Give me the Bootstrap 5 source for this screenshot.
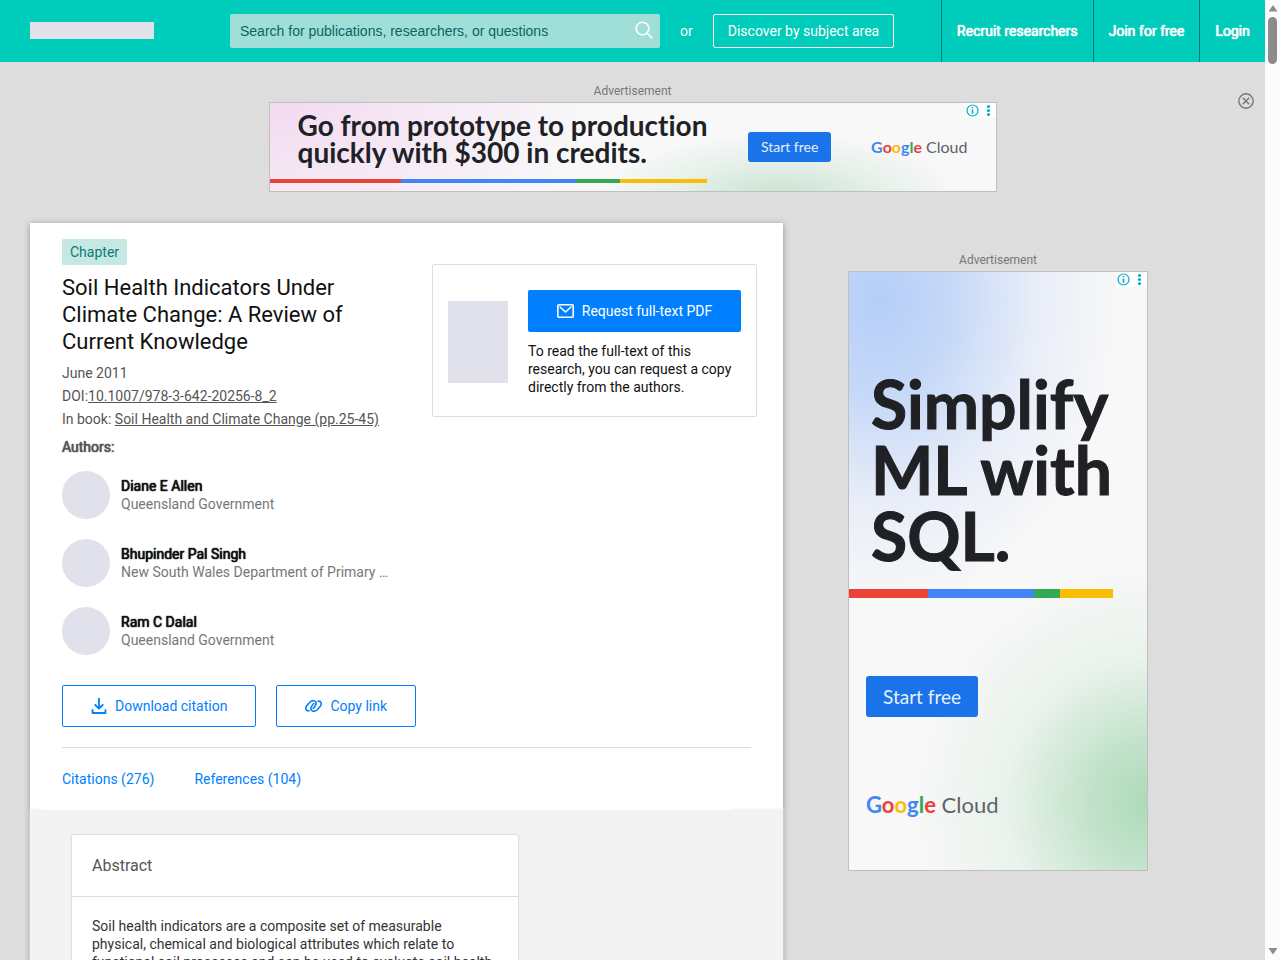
<!DOCTYPE html>
<html lang="en">
<head>
<meta charset="utf-8">
<meta name="viewport" content="width=device-width, initial-scale=1">
<title>Soil Health Indicators Under Climate Change: A Review of Current Knowledge</title>
<link href="https://cdn.jsdelivr.net/npm/bootstrap@5.3.0/dist/css/bootstrap.min.css" rel="stylesheet">
<style>
body{font-family:Roboto,"Liberation Sans",sans-serif;font-size:14px;line-height:18px;color:#111;background:#ddd}
.viewport-wrap{background:#ddd}
.topbar{background:#00ccbb;height:62px;color:#fff}
.site-logo{width:124px;height:17px;background:#e1e1eb;margin:0 76px 2px 30px}
.search-box{width:430px;height:34px;background:#a0dfd8;border-radius:2px}
.search-box input{font:14px "Liberation Sans",sans-serif;background:transparent;border:0;padding:0 10px;color:#0b6562;outline:0}
.search-box input::placeholder{color:#0b6562;opacity:1}
.search-box button{border:0;background:none;padding:0 7px 3px}
.discover{border:1px solid #fff;border-radius:2px;height:34px;padding:0 14px;line-height:32px;color:#fff}
.topnav a{color:#fff;padding:0 15px;border-left:1px solid #00786f;height:62px;line-height:62px}
.strong-text{font-weight:400;text-shadow:0 0 1px currentColor,0 0 1px currentColor}
.ad-label{font-size:12px;line-height:14px;color:#777;text-align:center}
.ad{border:1px solid #bfbfbf;position:relative;margin-top:4px;color:#202124;font-family:Lato,sans-serif;font-variant-ligatures:none}
.leader{width:728px;height:90px;background:radial-gradient(ellipse 180px 66px at 510px 96px,#c6e3d0,rgba(198,227,208,.4) 55%,rgba(198,227,208,0)),radial-gradient(ellipse 320px 180px at 0 0,#f3daf2,#f8f8f8)}
.leader .headline{font-size:28px;line-height:27px;font-weight:700;padding:9px 0 0 28px}
.leader .stripes{height:4px;width:438px;margin-bottom:8px}
.leader-end{gap:40px;padding-right:28px}
.stripe-red{background:#ea4335}.stripe-blue{background:#4285f4}.stripe-green{background:#34a853}.stripe-gold{background:#fbbc04}
.skyscraper{width:300px;height:600px;background:radial-gradient(circle 240px at 300px 530px,#acdab8,rgba(176,219,187,.75) 25%,rgba(176,219,187,.2) 60%,rgba(176,219,187,0)),radial-gradient(ellipse 240px 310px at 30px 28px,#b5cef8,#c5d8f8 30%,#e8edf8 65%,#f8f8f8)}
.headline{-webkit-text-stroke:1px #202124}
.leader .headline{-webkit-text-stroke:0}
.skyscraper .headline{font-size:66px;line-height:66px;font-weight:700;padding:99px 0 0 22px}
.skyscraper .stripes{height:9px;width:264px;margin-top:20px}
.cta{background:#1a73e8;color:#e8f0fe;border:0;border-radius:3px;font-family:Lato,sans-serif}
.cta-s{font-size:14px;width:83px;height:30px}
.cta-l{font-size:19px;width:112px;height:41px;margin:78px 0 0 17px}
.brand-s{font-size:16px;line-height:20px}
.brand-l{font-size:22px;line-height:30px;margin:73px 0 0 17px}
.g-b{color:#4285f4}.g-r{color:#ea4335}.g-y{color:#fbbc04}.g-g{color:#34a853}.g-c{color:#5f6368}
.g-b,.g-r,.g-y,.g-g{font-weight:700}
.ad-tools{position:absolute;top:0;right:0;background:#fff;height:15px}
.close-ad{position:absolute;right:11px;top:31px;border:0;background:none;padding:0}
.banner-row{padding:22px 0 31px}
.sheet{background:#fff;box-shadow:0 1px 6px rgba(0,0,0,.35);min-width:0;margin-left:30px}
.top-part{padding:16px 26px 0 32px}
.lead-col{width:354px}
.tag{background:#c5e8e3;color:#0c7a75;border-radius:2px;padding:4px 8px}
.paper-title{font-size:22px;line-height:27px;font-weight:400;color:#111;padding:9px 24px 0 0;margin-bottom:7px}
.meta{color:#555;line-height:23px}
.meta a{color:#555;text-decoration:underline}
.authors-label{padding-top:5px}
.author{gap:11px;margin-bottom:20px}
.author>div:last-child{padding-top:6px}
.authors-label+.author{margin-top:12px}
.avatar{width:48px;height:48px;border-radius:50%;background:#e1e1eb}
.inst{color:#777}
.actions{gap:20px;padding-top:10px}
.line-btn{border:1px solid #0080ff;background:#fff;color:#0080ff;border-radius:2px;height:42px;padding:0 28px}
.request{width:325px;border:1px solid #ddd;border-radius:2px;padding:25px 15px 20px;margin:25px 0 auto}
.request p{padding-top:10px}
.request button{background:#0080ff;color:#fff;border:0;border-radius:2px;height:42px}
.request-copy{margin-left:20px}
.thumb{width:60px;height:82px;background:#e1e1eb;margin-top:11px}
.rule{border-top:1px solid #ddd;margin:20px 32px 0}
.tabs{position:relative;gap:40px;background:#fff;margin:0 52px 0 12px;padding:22px 20px;z-index:1}
.tabs a{color:#0080ff}
.lower{background:#f3f3f3;box-shadow:0 -1px 2px #f3f3f3;padding:25px 42px 40px}
.abstract{background:#fff;border-radius:1px;box-shadow:0 0 2px rgba(0,0,0,.3)}
.abstract h2{font-size:16px;line-height:20px;font-weight:400;color:#555;padding:21px 20px 20px;border-bottom:1px solid #ddd}
.abstract-copy{padding:20px;color:#333}
.rail{width:482px;padding-left:65px}
.sky-wrap{width:300px;padding-top:30px}
.scroller{width:15px;background:#fcfcfc}
.scroll-thumb{width:9px;height:47px;border-radius:5px;background:#8b8b8b}
</style>
</head>
<body>
<div class="viewport-wrap d-flex vh-100 overflow-hidden">
<div class="flex-grow-1 overflow-hidden">
<header class="topbar d-flex align-items-center">
  <div class="site-logo flex-shrink-0"></div>
  <form class="search-box d-flex align-items-center">
    <input class="flex-grow-1 h-100" type="text" aria-label="Search" placeholder="Search for publications, researchers, or questions">
    <button type="button" aria-label="Submit search"><svg width="18" height="18" viewBox="0 0 18 18" fill="none" stroke="#fff" stroke-width="1.6" stroke-linecap="round"><circle cx="7.5" cy="7.5" r="6.3"/><path d="M12.2 12.2 17 17"/></svg></button>
  </form>
  <span class="px-3 mx-1">or</span>
  <a class="discover text-decoration-none text-nowrap" href="#">Discover by subject area</a>
  <nav class="topnav strong-text d-flex ms-auto text-nowrap"><a class="text-decoration-none" href="#">Recruit researchers</a><a class="text-decoration-none" href="#">Join for free</a><a class="text-decoration-none" href="#">Login</a></nav>
</header>

<section class="banner-row position-relative d-flex flex-column align-items-center">
  <div class="ad-label">Advertisement</div>
  <div class="ad leader d-flex justify-content-between">
    <div class="d-flex flex-column">
      <div class="headline text-nowrap">Go from prototype to production<br>quickly with $300 in credits.</div>
      <div class="stripes d-flex mt-auto"><i class="stripe-red" style="width:30%"></i><i class="stripe-blue" style="width:40%"></i><i class="stripe-green" style="width:10%"></i><i class="stripe-gold" style="width:20%"></i></div>
    </div>
    <div class="leader-end d-flex align-items-center">
      <button class="cta cta-s">Start free</button>
      <div class="brand-s"><span class="g-b">G</span><span class="g-r">o</span><span class="g-y">o</span><span class="g-b">g</span><span class="g-g">l</span><span class="g-r">e</span> <span class="g-c">Cloud</span></div>
    </div>
    <div class="ad-tools d-flex"><svg width="31" height="15" viewBox="0 0 31 15"><circle cx="7.5" cy="7.5" r="5.5" fill="none" stroke="#00aecd" stroke-width="1.2"/><path d="M7.5 6.5v4.3M7.5 4v1.3" stroke="#00aecd" stroke-width="1.6"/><g fill="#00aecd"><circle cx="23.5" cy="3.5" r="1.6"/><circle cx="23.5" cy="7.5" r="1.6"/><circle cx="23.5" cy="11.5" r="1.6"/></g></svg></div>
  </div>
  <button class="close-ad lh-1" aria-label="Close"><svg width="16" height="16" viewBox="0 0 16 16" fill="none" stroke="#777" stroke-width="1.4"><circle cx="8" cy="8" r="7.2"/><path d="m4.8 4.8 6.4 6.4m0-6.4-6.4 6.4"/></svg></button>
</section>

<main class="d-flex align-items-start">
  <article class="sheet flex-grow-1">
    <div class="top-part d-flex justify-content-between">
      <div class="lead-col">
        <span class="tag d-inline-block">Chapter</span>
        <h1 class="paper-title">Soil Health Indicators Under Climate Change: A Review of Current Knowledge</h1>
        <div class="meta">June 2011</div>
        <div class="meta">DOI:<a href="#">10.1007/978-3-642-20256-8_2</a></div>
        <div class="meta">In book: <a href="#">Soil Health and Climate Change (pp.25-45)</a></div>
        <div class="meta strong-text authors-label">Authors:</div>
        <div class="author d-flex"><div class="avatar"></div><div><div class="strong-text">Diane E Allen</div><div class="inst">Queensland Government</div></div></div>
        <div class="author d-flex"><div class="avatar"></div><div><div class="strong-text">Bhupinder Pal Singh</div><div class="inst">New South Wales Department of Primary …</div></div></div>
        <div class="author d-flex"><div class="avatar"></div><div><div class="strong-text">Ram C Dalal</div><div class="inst">Queensland Government</div></div></div>
        <div class="actions d-flex text-nowrap">
          <button class="line-btn d-flex align-items-center"><svg class="me-2" width="16" height="16" viewBox="0 0 16 16" fill="none" stroke="#0080ff" stroke-width="1.8"><path d="M8 0v10.5M4.3 7 8 10.7 11.7 7M1.5 12v3h13v-3" stroke-linecap="round" stroke-linejoin="round"/></svg>Download citation</button>
          <button class="line-btn d-flex align-items-center"><svg class="me-2" width="17" height="14" viewBox="0 0 17 14" fill="none" stroke="#0080ff" stroke-width="1.6" stroke-linecap="round"><path d="M4 11.800C1 12.200-.2 9.200 1.700 6.800L4.800 3.200C7.600.4 12 1.800 11 5.300 10.500 7 9.300 8.300 8.200 9.500"/><path d="M13 2.200c3-.4 4.200 2.600 2.300 5l-3.100 3.600c-2.800 2.800-7.200 1.400-6.200-2.100.5-1.700 1.700-3 2.800-4.200"/></svg>Copy link</button>
        </div>
      </div>
      <aside class="request d-flex flex-shrink-0">
        <div class="thumb flex-shrink-0"></div>
        <div class="flex-grow-1 request-copy"><button class="w-100 d-flex align-items-center justify-content-center"><svg class="me-2" width="17" height="14" viewBox="0 0 17 14" fill="none" stroke="#fff" stroke-width="1.6" stroke-linejoin="round"><rect x=".8" y=".8" width="15.400" height="12.400" rx="1"/><path d="m3 3 5.500 5L14 3" stroke-linecap="round"/></svg>Request full-text PDF</button>
        <p class="mb-0">To read the full-text of this research, you can request a copy directly from the authors.</p></div>
      </aside>
    </div>
    <div class="rule"></div>
    <nav class="tabs d-flex"><a class="text-decoration-none" href="#">Citations (276)</a><a class="text-decoration-none" href="#">References (104)</a></nav>
    <section class="lower"><div class="row g-0"><div class="col-8 abstract"><h2 class="mb-0">Abstract</h2><p class="abstract-copy mb-0">Soil health indicators are a composite set of measurable physical, chemical and biological attributes which relate to functional soil processes and can be used to evaluate soil health</p></div></div></section>
  </article>
  <aside class="rail flex-shrink-0">
    <div class="sky-wrap">
      <div class="ad-label">Advertisement</div>
      <div class="ad skyscraper d-flex flex-column align-items-start">
        <div class="headline text-nowrap">Simplify<br>ML with<br>SQL.</div>
        <div class="stripes d-flex"><i class="stripe-red" style="width:30%"></i><i class="stripe-blue" style="width:40%"></i><i class="stripe-green" style="width:10%"></i><i class="stripe-gold" style="width:20%"></i></div>
        <button class="cta cta-l">Start free</button>
        <div class="brand-l"><span class="g-b">G</span><span class="g-r">o</span><span class="g-y">o</span><span class="g-b">g</span><span class="g-g">l</span><span class="g-r">e</span> <span class="g-c">Cloud</span></div>
        <div class="ad-tools d-flex"><svg width="31" height="15" viewBox="0 0 31 15"><circle cx="7.5" cy="7.5" r="5.5" fill="none" stroke="#00aecd" stroke-width="1.2"/><path d="M7.5 6.5v4.3M7.5 4v1.3" stroke="#00aecd" stroke-width="1.6"/><g fill="#00aecd"><circle cx="23.5" cy="3.5" r="1.6"/><circle cx="23.5" cy="7.5" r="1.6"/><circle cx="23.5" cy="11.5" r="1.6"/></g></svg></div>
      </div>
    </div>
  </aside>
</main>
</div>
<div class="scroller flex-shrink-0 d-flex flex-column align-items-center justify-content-between py-1" aria-hidden="true">
  <div class="d-flex flex-column align-items-center"><svg class="mb-1" width="10" height="9" viewBox="0 0 10 9" fill="#8b8b8b"><path d="M5 1 9.500 7.500H.5z"/></svg><div class="scroll-thumb"></div></div>
  <svg width="10" height="9" viewBox="0 0 10 9" fill="#8b8b8b"><path d="M5 7.500.5 1h9z"/></svg>
</div>
</div>
<script src="https://cdn.jsdelivr.net/npm/bootstrap@5.3.0/dist/js/bootstrap.bundle.min.js"></script>
</body>
</html>
